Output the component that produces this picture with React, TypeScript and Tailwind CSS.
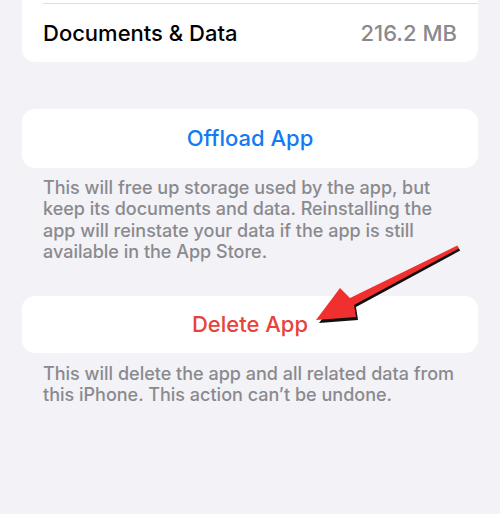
export default function App() {
  const font = { fontFamily: "Inter, 'Liberation Sans', sans-serif" };
  return (
    <div className="relative h-[514px] w-[500px] overflow-hidden bg-[#f2f2f7]" style={font}>
      <div className="flex flex-col px-[22px]">
        <div className="rounded-b-[13px] bg-white pt-[3px]">
          <div className="ml-[21px] flex h-[59px] items-center justify-between border-t border-[#dedee2] pr-[21px]">
            <span className="text-[22px] font-medium text-black">Documents &amp; Data</span>
            <span className="text-[22px] font-medium text-[#8a8a8e]">216.2 MB</span>
          </div>
        </div>

        <div className="mt-[47px] flex h-[59px] items-center justify-center rounded-[13px] bg-white">
          <span className="text-[22px] font-medium text-[#127bf3]">Offload App</span>
        </div>
        <p className="mt-[9px] px-[21px] text-[18px] font-medium leading-[21.3px] text-[#8a8a8e]">
          This will free up storage used by the app, but keep its documents and data. Reinstalling the app will
          reinstate your data if the app is still available in the App Store.
        </p>

        <div className="mt-[34px] flex h-[57px] items-center justify-center rounded-[13px] bg-white">
          <span className="text-[22px] font-medium text-[#e8433a]">Delete App</span>
        </div>
        <p className="mt-[10px] px-[21px] text-[18px] font-medium leading-[21.3px] text-[#8a8a8e]">
          This will delete the app and all related data from this iPhone. This action can’t be undone.
        </p>
      </div>

      <svg className="pointer-events-none absolute left-0 top-0" width="500" height="514" viewBox="0 0 500 514">
        <polygon
          points="457.3,245.6 459.2,248.6 355,305 357,318 318,321 341,290 350,298"
          fill="#111"
          transform="translate(1 2)"
        />
        <polygon
          points="457.3,245.6 458.9,248.4 354,305 356,317 316,320 340,288 350,298"
          fill="#f0302f"
        />
      </svg>
    </div>
  );
}
